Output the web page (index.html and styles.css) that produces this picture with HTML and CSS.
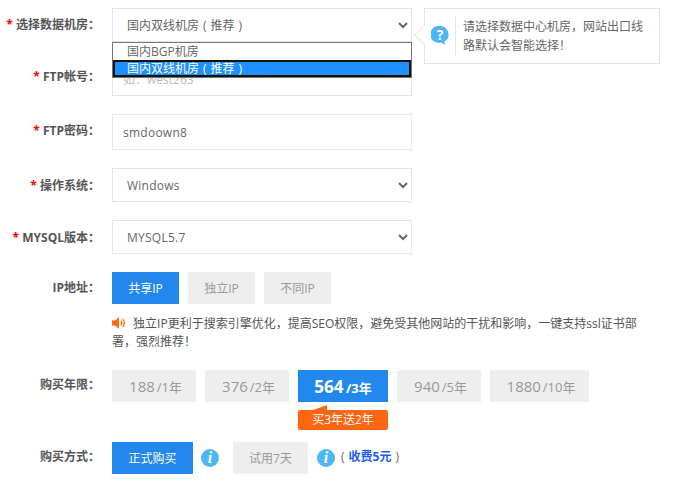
FILE: index.html
```html
<!DOCTYPE html>
<html lang="zh">
<head>
<meta charset="utf-8">
<title>购买</title>
<link rel="stylesheet" href="styles.css">
</head>
<body>
<form class="form">
  <div class="row row-select row-first">
    <label class="label"><span class="req">*</span> 选择数据机房<span class="pc">：</span></label>
    <select class="field select"><option>国内双线机房&#8196;(&#8196;推荐&#8196;)</option></select>
    <div class="dropdown">
      <div class="opt">国内BGP机房</div>
      <div class="opt opt-on">国内双线机房&#8196;(&#8196;推荐&#8196;)</div>
    </div>
    <div class="tip">
      <span class="tip-arrow"></span>
      <svg class="tip-icon" viewBox="0 0 18 20" width="18" height="20"><path d="M9 0a8.500 8.500 0 0 1 4.500 15.700L14 19l-3.500-2.600A8.500 8.500 0 1 1 9 0z" fill="#4db6f5"/><text x="9" y="13.500" text-anchor="middle" class="tip-q">?</text></svg>
      <p class="tip-text">请选择数据中心机房<span class="pc">，</span>网站出口线路默认会智能选择<span class="pc">！</span></p>
    </div>
  </div>
  <div class="row row-input row-ftp">
    <label class="label"><span class="req">*</span> FTP帐号<span class="pc">：</span></label>
    <input class="field input" placeholder="如：west263">
  </div>
  <div class="row row-input row-pass">
    <label class="label"><span class="req">*</span> FTP密码<span class="pc">：</span></label>
    <input class="field input latin" value="smdoown8">
  </div>
  <div class="row row-select">
    <label class="label"><span class="req">*</span> 操作系统<span class="pc">：</span></label>
    <select class="field select latin"><option>Windows</option></select>
  </div>
  <div class="row row-select">
    <label class="label"><span class="req">*</span> MYSQL版本<span class="pc">：</span></label>
    <select class="field select latin"><option>MYSQL5.7</option></select>
  </div>
  <div class="row row-btns">
    <label class="label">IP地址<span class="pc">：</span></label>
    <div class="btns">
      <button type="button" class="btn btn-on w67">共享IP</button>
      <button type="button" class="btn w67">独立IP</button>
      <button type="button" class="btn w67">不同IP</button>
    </div>
  </div>
  <div class="notice">
    <svg class="speaker" viewBox="0 0 14 14" width="14" height="14"><path d="M0 4.500h3L7 1v12L3 9.500H0z" fill="#ff6a13"/><path d="M9 4.500q1.500 2.500 0 5M11 3q2.500 4 0 8" fill="none" stroke="#ff6a13" stroke-width="1.300"/></svg>
    独立IP更利于搜索引擎优化<span class="pc">，</span>提高SEO权限<span class="pc">，</span>避免受其他网站的干扰和影响<span class="pc">，</span>一键支持ssl证书部署<span class="pc">，</span>强烈推荐<span class="pc">！</span>
  </div>
  <div class="row row-years">
    <label class="label">购买年限<span class="pc">：</span></label>
    <div class="btns">
      <button type="button" class="btn year w84">188 <small>/1年</small></button>
      <button type="button" class="btn year w84">376 <small>/2年</small></button>
      <div class="year-on">
        <button type="button" class="btn btn-on year year-sel">564 <small>/3年</small></button>
        <span class="badge">买3年送2年</span>
      </div>
      <button type="button" class="btn year w84">940 <small>/5年</small></button>
      <button type="button" class="btn year w99">1880 <small>/10年</small></button>
    </div>
  </div>
  <div class="row row-buy">
    <label class="label">购买方式<span class="pc">：</span></label>
    <button type="button" class="btn btn-on w81">正式购买</button>
    <svg class="info info-a" viewBox="0 0 18 18" width="18" height="18"><circle cx="9" cy="9" r="9" fill="#4db6f5"/><text x="9" y="14" text-anchor="middle" class="info-i">i</text></svg>
    <button type="button" class="btn w75">试用7天</button>
    <svg class="info info-b" viewBox="0 0 18 18" width="18" height="18"><circle cx="9" cy="9" r="9" fill="#4db6f5"/><text x="9" y="14" text-anchor="middle" class="info-i">i</text></svg>
    <span class="fee">&#8196;(&#8196;<b>收费5元</b>&#8196;)</span>
  </div>
</form>
</body>
</html>
```
FILE: styles.css
```css
* { box-sizing: border-box; }
html, body { margin: 0; padding: 0; background: #fff; }
body {
  width: 675px;
  height: 485px;
  overflow: hidden;
  font-family: "Open Sans", "Noto Sans CJK SC", sans-serif;
  font-size: 12px;
  color: #555;
}
.form { padding-top: 8px; }
.pc { font-family: "Noto Sans CJK TC", sans-serif; line-height: 0; }
.row { display: flex; align-items: flex-start; position: relative; }
.label {
  width: 100px;
  height: 32px;
  margin-right: 12px;
  flex: none;
  text-align: right;
  font-weight: 700;
  font-size: 12px;
  line-height: 36px;
  color: #555;
  white-space: nowrap;
}
.req { color: #f00; }
.field {
  width: 300px;
  height: 34px;
  border: 1px solid #e5e5e5;
  background: #fff;
  color: #666;
  font-family: inherit;
  font-size: 12px;
  border-radius: 0;
  outline: 0;
}
.latin { letter-spacing: .25px; }
.select { padding-left: 10px; }
.input { padding-left: 10px; }
.input::placeholder { color: #bbb; font-family: "Open Sans", "Noto Sans CJK TC", sans-serif; }
.row-select, .row-input { margin-bottom: 18px; }
.row-first { margin-bottom: 20px; }
.row-first .label { line-height: 34px; }
.row-ftp .label { line-height: 30px; }
.row-pass .label { line-height: 34px; }
.row-pass .input { height: 36px; }
.dropdown {
  position: absolute;
  left: 112px;
  top: 34px;
  width: 300px;
  height: 36px;
  border: 1px solid #767676;
  background: #fff;
  z-index: 2;
}
.opt { height: 17px; line-height: 17px; padding-left: 14px; color: #666; font-size: 12px; white-space: nowrap; }
.opt-on { height: 17px; line-height: 13px; padding-left: 12px; background: #1e90ff; color: #fff; border: 2px solid #111; }
.tip {
  position: absolute;
  left: 424px;
  top: 0;
  width: 236px;
  height: 56px;
  border: 1px solid #e5e5e5;
  background: #fff;
  display: flex;
  align-items: center;
  padding: 8px 0 8px 6px;
}
.tip-arrow {
  position: absolute;
  left: -8px;
  top: 19px;
  width: 14px;
  height: 14px;
  background: #fff;
  border-left: 1px solid #e5e5e5;
  border-bottom: 1px solid #e5e5e5;
  transform: rotate(45deg);
}
.tip-icon { flex: none; position: relative; margin-right: 6px; }
.tip-q { font-size: 14px; font-weight: 700; fill: #fff; font-family: "Open Sans", sans-serif; }
.tip-text {
  margin: 0;
  padding-left: 7px;
  border-left: 1px solid #e5e5e5;
  line-height: 19px;
  font-size: 12px;
  color: #666;
  width: 194px;
}
.btns { display: flex; gap: 9px; }
.btn {
  height: 32px;
  border: 0;
  padding: 0;
  background: #eee;
  color: #999;
  font-family: inherit;
  font-size: 12px;
  white-space: nowrap;
}
.btn-on { background: #2388ee; color: #fff; }
.w67 { width: 67px; }
.w84 { width: 84px; }
.w99 { width: 99px; }
.w81 { width: 81px; }
.w75 { width: 75px; }
.row-btns .label { line-height: 32px; }
.row-years .label { line-height: 30px; }
.row-buy .label { line-height: 30px; }
.notice {
  margin: 11px 0 0 112px;
  width: 530px;
  line-height: 18px;
  font-size: 12px;
  color: #555;
}
.speaker { vertical-align: -2px; margin-right: 4px; }
.row-years { margin-top: 19px; }
.year { font-size: 15px; word-spacing: -2px; padding-left: 3px; }
.year small { font-size: 13px; }
.year-on { position: relative; width: 90px; height: 32px; }
.year-sel { width: 90px; font-weight: 700; font-size: 17px; padding-left: 0; }
.badge {
  position: absolute;
  left: 0;
  top: 40px;
  width: 90px;
  height: 20px;
  line-height: 20px;
  background: #ff6611;
  color: #fff;
  text-align: center;
  border-radius: 2px;
  font-size: 12px;
}
.badge::before {
  content: "";
  position: absolute;
  left: 15px;
  top: -5px;
  border-left: 14px solid transparent;
  border-bottom: 5px solid #ff6611;
}
.row-buy { margin-top: 40px; align-items: flex-start; }
.info-a { margin: 7px 14px 0 8px; }
.info-b { margin: 7px 0 0 9px; }
.info-i { font-size: 16px; font-weight: 700; font-style: italic; fill: #fff; font-family: "Liberation Serif", serif; }
.fee { line-height: 30px; margin-left: 2px; color: #666; }
.fee b { color: #1a5bf0; }
```
